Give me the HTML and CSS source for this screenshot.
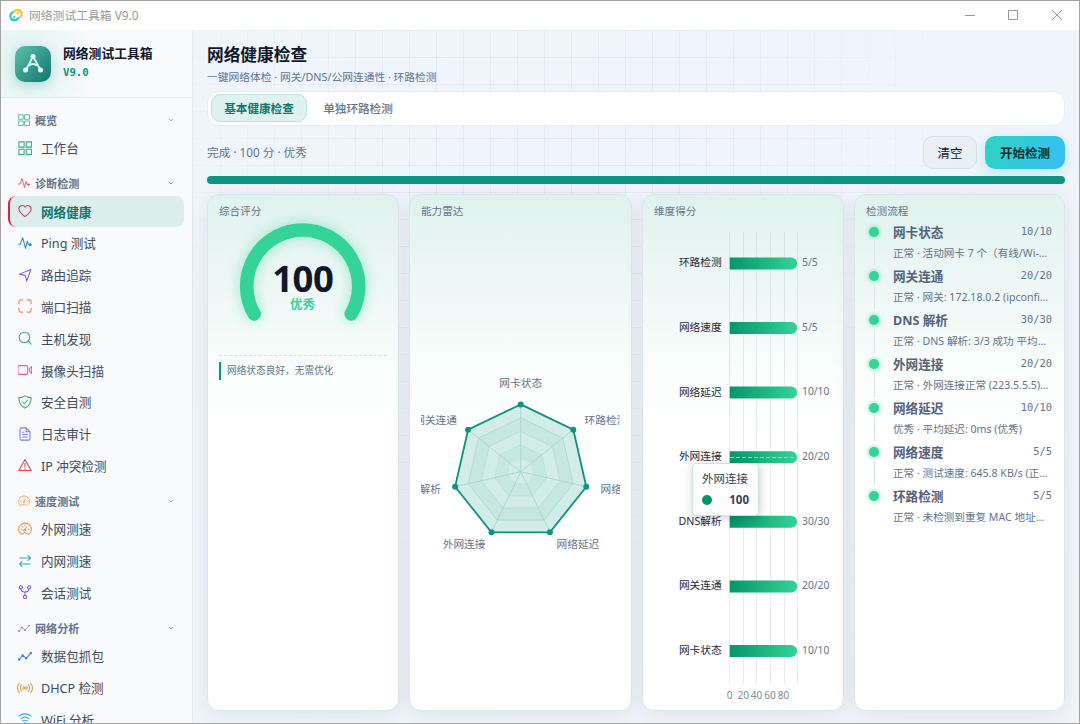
FILE: index.html
```
<!DOCTYPE html>
<html lang="zh-CN">
<head>
    <meta charset="UTF-8">
    <meta name="viewport" content="width=device-width, initial-scale=1.0">
    <title>网络测试工具箱 V9.0</title>
    <link rel="stylesheet" href="styles.css">
</head>
<body>

<!-- 图标 -->
<svg class="defs" width="0" height="0">
    <symbol id="i-grid" viewBox="0 0 24 24"><rect x="1.500" y="1.500" width="9" height="9"/><rect x="14" y="1.500" width="9" height="9"/><rect x="1.500" y="14" width="9" height="9"/><rect x="14" y="14" width="9" height="9"/></symbol>
    <symbol id="i-pulse" viewBox="0 0 24 24"><path d="M1 14h3L8 3l5 18 3-12 2 6h2"/><circle cx="21" cy="15" r="1.500" fill="currentColor"/></symbol>
    <symbol id="i-heart" viewBox="0 0 24 24"><path d="M12 21.500C8 18.500 1.500 14 1.500 8.500A5.600 5.600 0 0 1 12 5.500 5.600 5.600 0 0 1 22.500 8.500C22.500 14 16 18.500 12 21.500z"/></symbol>
    <symbol id="i-send" viewBox="0 0 24 24"><path d="M22 2.500L2.500 10.500l10 2.500 2.500 9.500z"/></symbol>
    <symbol id="i-scan" viewBox="0 0 24 24"><path d="M1.500 8V5a3.500 3.500 0 0 1 3.500-3.500h3M16 1.500h3A3.500 3.500 0 0 1 22.500 5v3M22.500 16v3a3.500 3.500 0 0 1-3.500 3.500h-3M8 22.500H5A3.500 3.500 0 0 1 1.500 19v-3"/></symbol>
    <symbol id="i-search" viewBox="0 0 24 24"><circle cx="11" cy="11" r="9"/><path d="M17.500 17.500L22.500 22.500"/></symbol>
    <symbol id="i-video" viewBox="0 0 24 24"><rect x="0" y="4.500" width="16.500" height="15" rx="2.500"/><path d="M19.500 10l4-4v12l-4-4z"/></symbol>
    <symbol id="i-shield" viewBox="0 0 24 24"><path d="M12 1.500c3 2 6.500 3 10.500 3 0 9-2.500 14-10.500 18C4 18.500 1.500 13.500 1.500 4.500c4 0 7.500-1 10.500-3zM8 12l3 3 5-6"/></symbol>
    <symbol id="i-file" viewBox="0 0 24 24"><path d="M14 1.500H6a2.500 2.500 0 0 0-2.500 2.500v16A2.500 2.500 0 0 0 6 22.500h12a2.500 2.500 0 0 0 2.500-2.500V8zM14 1.500V8h6.500M8 9h2M8 13h8M8 17h8"/></symbol>
    <symbol id="i-alert" viewBox="0 0 24 24"><path d="M12 2.500L1.500 21.500h21zM12 9v6M12 17.500v1.500"/></symbol>
    <symbol id="i-gauge" viewBox="0 0 24 24"><path d="M5 20.500a11 10.500 0 1 1 14 0q-2 1-4-1-3-2-6 0-2 2-4 1zM11 14l4-6M5 13h1.500M18 13h1M7 8l1 1M12 5v1.500"/><circle cx="11.500" cy="14" r="1.500"/></symbol>
    <symbol id="i-swap" viewBox="0 0 24 24"><path d="M3 7h18M17 2.500L21.500 7 17 11M21 17H3M7 13l-4.500 4L7 21.500"/></symbol>
    <symbol id="i-fork" viewBox="0 0 24 24"><circle cx="5" cy="4" r="2.700"/><circle cx="19" cy="4" r="2.700"/><circle cx="12" cy="20.500" r="2.700"/><path d="M5 7c0 4 2 5 7 5 5 0 7-1 7-5M12 12v6"/></symbol>
    <symbol id="i-trend" viewBox="0 0 24 24"><path d="M2 18l6-7 6 5 8-9"/><g fill="currentColor"><circle cx="2" cy="18" r="1.200"/><circle cx="8" cy="11" r="1.200"/><circle cx="14" cy="16" r="1.200"/><circle cx="22" cy="7" r="1.200"/></g></symbol>
    <symbol id="i-cast" viewBox="0 0 28 24"><path d="M4 4c-4 5-4 11 0 16M8 6c-3 4-3 8 0 12M11 9c-1 2-1 4 0 6M24 4c4 5 4 11 0 16M20 6c3 4 3 8 0 12M17 9c1 2 1 4 0 6"/><circle cx="14" cy="12" r="1.200" fill="currentColor"/></symbol>
    <symbol id="i-wifi" viewBox="0 0 24 24"><path d="M1.500 7c6-5 15-5 21 0M5 11.500c4-4 10-4 14 0M8 15.500c3-2 5-2 8 0"/><circle cx="12" cy="20" r="1.500"/></symbol>
    <symbol id="i-down" viewBox="0 0 24 24"><path d="M4 8l8 8 8-8"/></symbol>
</svg>

<div class="window">
    <header class="titlebar">
        <svg class="app-icon" viewBox="0 0 24 24">
            <g fill="none" stroke-width="3.500"><path d="M8 8a7 7 0 1 1 8 9" stroke="#ffc131"/><path d="M16 16a7 7 0 1 1-8-9" stroke="#24c8db"/></g>
            <circle cx="15" cy="8.500" r="2" fill="#ffc131"/><circle cx="9" cy="15.500" r="2" fill="#24c8db"/>
        </svg>
        <span class="titlebar-text">网络测试工具箱 V9.0</span>
        <svg class="win-controls" viewBox="0 0 110 20"><path d="M5 10.500h10M48.500 5.500h9v9h-9zM92 5l10 10M102 5L92 15"/></svg>
    </header>

    <div class="layout">
        <aside class="sidebar">
            <div class="brand">
                <div class="logo">
                    <svg viewBox="0 0 36 36"><g fill="none" stroke="#dcfff6" stroke-width="1.800"><path d="M18 10.500L11 24M18 10.500L25.500 24M14 19.500q4-3 8 0"/></g><g fill="#e6fffa"><circle cx="18" cy="10.500" r="2.500"/><circle cx="10.500" cy="24" r="2.500"/><circle cx="25.500" cy="24" r="2.500"/></g></svg>
                </div>
                <div>
                    <div class="brand-name">网络测试工具箱</div>
                    <div class="brand-version">V9.0</div>
                </div>
            </div>

            <nav class="nav">
                <div class="nav-group teal"><svg><use href="#i-grid"/></svg><span>概览</span><svg class="arrow"><use href="#i-down"/></svg></div>
                <a class="nav-item teal"><svg><use href="#i-grid"/></svg><span>工作台</span></a>

                <div class="nav-group rose"><svg><use href="#i-pulse"/></svg><span>诊断检测</span><svg class="arrow"><use href="#i-down"/></svg></div>
                <a class="nav-item rose active"><svg><use href="#i-heart"/></svg><span>网络健康</span></a>
                <a class="nav-item blue"><svg><use href="#i-pulse"/></svg><span>Ping 测试</span></a>
                <a class="nav-item violet"><svg><use href="#i-send"/></svg><span>路由追踪</span></a>
                <a class="nav-item orange"><svg><use href="#i-scan"/></svg><span>端口扫描</span></a>
                <a class="nav-item teal"><svg><use href="#i-search"/></svg><span>主机发现</span></a>
                <a class="nav-item pink"><svg><use href="#i-video"/></svg><span>摄像头扫描</span></a>
                <a class="nav-item green"><svg><use href="#i-shield"/></svg><span>安全自测</span></a>
                <a class="nav-item indigo"><svg><use href="#i-file"/></svg><span>日志审计</span></a>
                <a class="nav-item red"><svg><use href="#i-alert"/></svg><span>IP 冲突检测</span></a>

                <div class="nav-group amber"><svg><use href="#i-gauge"/></svg><span>速度测试</span><svg class="arrow"><use href="#i-down"/></svg></div>
                <a class="nav-item amber"><svg><use href="#i-gauge"/></svg><span>外网测速</span></a>
                <a class="nav-item cyan"><svg><use href="#i-swap"/></svg><span>内网测速</span></a>
                <a class="nav-item violet"><svg><use href="#i-fork"/></svg><span>会话测试</span></a>

                <div class="nav-group indigo"><svg><use href="#i-trend"/></svg><span>网络分析</span><svg class="arrow"><use href="#i-down"/></svg></div>
                <a class="nav-item royal"><svg><use href="#i-trend"/></svg><span>数据包抓包</span></a>
                <a class="nav-item gold"><svg class="wide"><use href="#i-cast"/></svg><span>DHCP 检测</span></a>
                <a class="nav-item sky"><svg><use href="#i-wifi"/></svg><span>WiFi 分析</span></a>
            </nav>
        </aside>

        <main class="main">
            <h1>网络健康检查</h1>
            <p class="subtitle">一键网络体检 · 网关/DNS/公网连通性 · 环路检测</p>

            <div class="tabs">
                <button class="tab active">基本健康检查</button>
                <button class="tab">单独环路检测</button>
            </div>

            <div class="toolbar">
                <span class="status">完成 · 100 分 · 优秀</span>
                <button class="btn">清空</button>
                <button class="btn primary">开始检测</button>
            </div>
            <div class="progress"></div>

            <div class="cards">
                <section class="card">
                    <h2>综合评分</h2>
                    <svg class="gauge" viewBox="0 0 168 132">
                        <path d="M35.200 95A56 56 0 1 1 132.200 95"/>
                        <text class="gauge-num" x="83.700" y="72.700">100</text>
                        <text class="gauge-level" x="83.500" y="89.500">优秀</text>
                    </svg>
                    <div class="advice"><span>网络状态良好，无需优化</span></div>
                </section>

                <section class="card">
                    <h2>能力雷达</h2>
                    <svg class="radar" viewBox="421 222 199 478">
                        <defs><polygon id="hept" points="0,-67.300 52.600,-42 65.600,15 29.200,60.600 -29.200,60.600 -65.600,15 -52.600,-42"/></defs>
                        <g transform="translate(520.700 471.700)">
                            <g class="rings">
                                <use href="#hept" class="r-light"/>
                                <use href="#hept" class="r-dark" transform="scale(.8)"/>
                                <use href="#hept" class="r-light" transform="scale(.6)"/>
                                <use href="#hept" class="r-dark" transform="scale(.4)"/>
                                <use href="#hept" class="r-light" transform="scale(.2)"/>
                                <path d="M0 0V-67.300M0 0L52.600-42M0 0L65.600 15M0 0L29.200 60.600M0 0L-29.200 60.600M0 0L-65.600 15M0 0L-52.600-42"/>
                            </g>
                            <use href="#hept" class="radar-line"/>
                            <g class="radar-dots"><circle cy="-67.300" r="3"/><circle cx="52.600" cy="-42" r="3"/><circle cx="65.600" cy="15" r="3"/><circle cx="29.200" cy="60.600" r="3"/><circle cx="-29.200" cy="60.600" r="3"/><circle cx="-65.600" cy="15" r="3"/><circle cx="-52.600" cy="-42" r="3"/></g>
                        </g>
                        <g class="radar-labels">
                            <text x="520.700" y="387" text-anchor="middle">网卡状态</text>
                            <text x="584.500" y="424">环路检测</text>
                            <text x="600.500" y="493">网络速度</text>
                            <text x="556.500" y="548">网络延迟</text>
                            <text x="485.500" y="548" text-anchor="end">外网连接</text>
                            <text x="441" y="493" text-anchor="end">DNS解析</text>
                            <text x="457" y="424" text-anchor="end">网关连通</text>
                        </g>
                    </svg>
                </section>

                <section class="card">
                    <h2>维度得分</h2>
                    <svg class="bars" viewBox="654 222 178 478">
                        <defs>
                            <linearGradient id="barFill"><stop offset="0" stop-color="#059669"/><stop offset="1" stop-color="#34d399"/></linearGradient>
                            <path id="bar" d="M0-6H61.500A6 6 0 0 1 61.500 6H0z" fill="url(#barFill)"/>
                        </defs>
                        <path class="grid-lines" d="M729.500 232V684M743.500 232V684M756.500 232V684M770.500 232V684M784.500 232V684M797.500 232V684"/>
                        <use href="#bar" x="729.700" y="263.400"/>
                        <use href="#bar" x="729.700" y="328"/>
                        <use href="#bar" x="729.700" y="392.600"/>
                        <use href="#bar" x="729.700" y="457.200"/>
                        <use href="#bar" x="729.700" y="521.800"/>
                        <use href="#bar" x="729.700" y="586.400"/>
                        <use href="#bar" x="729.700" y="651"/>
                        <path class="pointer" d="M730 457.500H797"/>
                        <g class="bar-names" text-anchor="end">
                            <text x="721.700" y="266">环路检测</text>
                            <text x="721.700" y="331">网络速度</text>
                            <text x="721.700" y="395.500">网络延迟</text>
                            <text x="721.700" y="460">外网连接</text>
                            <text x="721.700" y="524.600">DNS解析</text>
                            <text x="721.700" y="589">网关连通</text>
                            <text x="721.700" y="653.700">网卡状态</text>
                        </g>
                        <g class="bar-values">
                            <text x="802" y="266">5/5</text>
                            <text x="802" y="330.600">5/5</text>
                            <text x="802" y="395.200">10/10</text>
                            <text x="802" y="459.800">20/20</text>
                            <text x="802" y="524.600">30/30</text>
                            <text x="802" y="589">20/20</text>
                            <text x="802" y="653.700">10/10</text>
                        </g>
                        <g class="bar-axis" text-anchor="middle">
                            <text x="729.500" y="699">0</text>
                            <text x="743.200" y="699">20</text>
                            <text x="756.600" y="699">40</text>
                            <text x="770" y="699">60</text>
                            <text x="783.600" y="699">80</text>
                        </g>
                    </svg>
                    <div class="tooltip">
                        <div>外网连接</div>
                        <div class="tooltip-row"><i></i><b>100</b></div>
                    </div>
                </section>

                <section class="card">
                    <h2>检测流程</h2>
                    <ul class="steps">
                        <li><div class="step-head"><b>网卡状态</b><span>10/10</span></div><p>正常 · 活动网卡 7 个（有线/Wi-Fi）</p></li>
                        <li><div class="step-head"><b>网关连通</b><span>20/20</span></div><p>正常 · 网关: 172.18.0.2 (ipconfig) 可达</p></li>
                        <li><div class="step-head"><b>DNS 解析</b><span>30/30</span></div><p>正常 · DNS 解析: 3/3 成功 平均耗时</p></li>
                        <li><div class="step-head"><b>外网连接</b><span>20/20</span></div><p>正常 · 外网连接正常 (223.5.5.5)，可达</p></li>
                        <li><div class="step-head"><b>网络延迟</b><span>10/10</span></div><p>优秀 · 平均延迟: 0ms (优秀)</p></li>
                        <li><div class="step-head"><b>网络速度</b><span>5/5</span></div><p>正常 · 测试速度: 645.8 KB/s (正常)</p></li>
                        <li><div class="step-head"><b>环路检测</b><span>5/5</span></div><p>正常 · 未检测到重复 MAC 地址，正常</p></li>
                    </ul>
                </section>
            </div>
        </main>
    </div>
</div>

</body>
</html>
```
FILE: styles.css
```
/* 基本样式 */
* {
    box-sizing: border-box;
}

body {
    margin: 0;
    height: 100vh;
    overflow: hidden;
    font-family: "Noto Sans", "Noto Sans CJK SC", sans-serif;
    color: #0f172a;
}

h1, h2, p, ul {
    margin: 0;
    padding: 0;
    font-weight: 400;
}

button {
    font-family: inherit;
}

.defs {
    position: absolute;
}

.window {
    height: 100vh;
    display: flex;
    flex-direction: column;
    border: 1px solid #a3a3a3;
}

/* 标题栏 */
.titlebar {
    height: 29px;
    flex: none;
    display: flex;
    align-items: center;
    padding: 0 9px 2px 8px;
    background: #fff;
}

.app-icon {
    width: 14px;
    height: 14px;
    margin-right: 6px;
}

.titlebar-text {
    flex: 1;
    font-size: 11.800px;
    color: #999;
}

.win-controls {
    width: 110px;
    height: 20px;
    fill: none;
    stroke: #999;
}

.layout {
    flex: 1;
    min-height: 0;
    display: flex;
}

/* 侧边栏 */
.sidebar {
    width: 192px;
    flex: none;
    overflow: hidden;
    border-right: 1px solid #e2e8ec;
    background: #f8fafc;
}

.brand {
    height: 68px;
    display: flex;
    align-items: center;
    gap: 12px;
    padding: 0 14px;
    border-bottom: 1px solid #e2e8ec;
    background: radial-gradient(circle at 25px 32px, #def2ef, #f8fafc 70px);
}

.logo {
    width: 36px;
    height: 36px;
    border-radius: 10px;
    background: linear-gradient(135deg, #5cc0ac, #0f766e);
    box-shadow: 0 4px 12px rgba(13, 148, 136, .25);
}

.brand-name {
    font-size: 12.800px;
    font-weight: 700;
    line-height: 20px;
    margin-top: -2px;
}

.brand-version {
    font: 700 10.700px/18px "DejaVu Sans Mono", monospace;
    color: #0d9488;
    margin-top: 1px;
}

.nav {
    padding: 2px 8px 0 7px;
}

.nav-group, .nav-item {
    height: 31.780px;
    display: flex;
    align-items: center;
    padding-left: 10px;
}

.nav-group {
    padding: 8px 10px 0 10px;
    gap: 5px;
    font-size: 11.100px;
    font-weight: 700;
}

.nav-group span {
    flex: 1;
    color: #64748b;
}

.nav svg {
    width: 14px;
    height: 14px;
    fill: none;
    stroke: currentColor;
    stroke-width: 1.800;
    stroke-linecap: round;
    stroke-linejoin: round;
}

.nav-group svg {
    width: 12px;
    height: 12px;
    opacity: .85;
}

.nav-group .arrow {
    width: 6px;
    height: 6px;
    color: #94a3b8;
    stroke-width: 4;
}

.nav-item {
    gap: 9px;
    font-size: 12.600px;
}

.nav svg.wide {
    width: 16px;
    margin: 0 -1px;
}

.nav-item span {
    color: #3f4b5f;
}

.nav-item.active {
    height: 30.780px;
    margin-top: 1px;
    border-left: 2px solid #e11d48;
    padding: 0 0 1px 8px;
    border-radius: 8px;
    background: #dceeeb;
}

.nav-item.active span {
    color: #0f766e;
    font-weight: 700;
}

.teal { color: #35a984; }
.rose { color: #dc3561; }
.blue { color: #2a91bd; }
.violet { color: #8358e0; }
.orange { color: #ed8746; }
.pink { color: #e85b98; }
.green { color: #38ad6b; }
.indigo { color: #8278df; }
.red { color: #e04545; }
.amber { color: #e59a45; }
.cyan { color: #35a6bf; }
.royal { color: #4b7ae5; }
.gold { color: #d4a34c; }
.sky { color: #38a8e0; }

/* 主区域 */
.main {
    flex: 1;
    min-width: 0;
    position: relative;
    display: flex;
    flex-direction: column;
    padding: 14px 14px 12px;
    background: linear-gradient(150deg, #f0f5fb, #eff4fd 45%, #f1f5f9);
}

/* 网格背景 */
.main::before {
    content: "";
    position: absolute;
    inset: 0;
    background:
        linear-gradient(90deg, rgba(100, 116, 139, .08) 1px, transparent 1px),
        linear-gradient(rgba(100, 116, 139, .08) 1px, transparent 1px);
    background-size: 27px 27px;
    -webkit-mask-image: radial-gradient(ellipse at 40% 15%, #000 20%, transparent 58%);
    mask-image: radial-gradient(ellipse at 40% 15%, #000 20%, transparent 58%);
}

.main > * {
    position: relative;
}

h1 {
    font-size: 16.700px;
    font-weight: 700;
    line-height: 22px;
}

.subtitle {
    font-size: 10.750px;
    line-height: 16px;
    margin-top: 3px;
    color: #64748b;
}

.tabs {
    height: 35px;
    flex: none;
    display: flex;
    gap: 3px;
    margin-top: 6px;
    padding: 2px 3px 3px;
    border: 1px solid #e8edf2;
    border-radius: 12px;
    background: #fff;
}

.tab {
    width: 96px;
    padding: 0;
    border: 1px solid transparent;
    border-radius: 9px;
    background: none;
    font-size: 11.600px;
    font-weight: 500;
    color: #64748b;
}

.tab.active {
    border-color: #b9e3db;
    background: #e0f2ef;
    color: #0f766e;
    font-weight: 700;
}

.toolbar {
    display: flex;
    align-items: center;
    gap: 8px;
    margin-top: 10px;
}

.status {
    flex: 1;
    padding-bottom: 3px;
    font-size: 11.700px;
    color: #64748b;
}

.btn {
    width: 54px;
    height: 33px;
    padding: 0 0 1px;
    border: 1px solid #d8dfe7;
    border-radius: 10px;
    background: linear-gradient(135deg, #eceff5, #e7f0f2);
    font-size: 12.500px;
    color: #0f172a;
}

.btn.primary {
    width: 80px;
    border: 0;
    background: linear-gradient(120deg, #2dd4bf, #38bdf8);
    box-shadow: 0 5px 14px rgba(20, 184, 166, .22);
    font-weight: 700;
    color: #042f2e;
}

.progress {
    height: 8px;
    flex: none;
    margin-top: 7px;
    border-radius: 4px;
    background: #0d9480;
}

/* 结果卡片 */
.cards {
    flex: 1;
    min-height: 0;
    display: grid;
    grid-template-columns: 192px 223px 202px 211px;
    justify-content: space-between;
    margin-top: 10px;
}

.card {
    position: relative;
    min-width: 0;
    padding: 8px 11px 10px;
    border: 1px solid #dce6e8;
    border-radius: 12px;
    background: linear-gradient(#e0f2ee, #fbfefd 190px, #fff 240px);
    box-shadow: 0 4px 20px rgba(15, 23, 42, .08);
}

.card h2 {
    font-size: 10.600px;
    line-height: 16px;
    color: #64748b;
}

.card svg {
    display: block;
}

.gauge {
    width: 168px;
    height: 132px;
    overflow: visible;
    fill: none;
}

.gauge path {
    stroke: #34d399;
    stroke-width: 13.500;
    stroke-linecap: round;
    filter: drop-shadow(0 0 7px rgba(52, 211, 153, .45));
}

.gauge text {
    text-anchor: middle;
    font-weight: 700;
}

.gauge-num {
    font-size: 36.500px;
    letter-spacing: -.5px;
    fill: #0f172a;
}

.gauge-level {
    font-size: 12.500px;
    fill: #34d399;
}

.advice {
    margin-top: 4px;
    padding-top: 6px;
    border-top: 1px dashed #d8e1e4;
}

.advice span {
    display: block;
    border-left: 2px solid #0d9480;
    padding-left: 6px;
    font-size: 9.700px;
    line-height: 18px;
    color: #64748b;
}

/* 雷达图 */
.radar {
    width: 199px;
    height: 478px;
    margin-top: 3px;
}

.rings {
    fill: none;
    stroke: #9fcfc6;
    stroke-width: .700;
}

.r-light { fill: #d2ece7; }
.r-dark { fill: #c6e6e0; }

.radar-line {
    fill: none;
    stroke: #0d9480;
    stroke-width: 1.800;
}

.radar-dots {
    fill: #0d9480;
}

.radar-labels {
    font-size: 10.700px;
    fill: #64748b;
}

/* 条形图 */
.bars {
    width: 178px;
    height: 478px;
    margin-top: 3px;
}

.grid-lines {
    stroke: #94a3b8;
    stroke-opacity: .22;
}

.pointer {
    stroke: #86dfba;
    stroke-dasharray: 4 2;
}

.bar-names {
    font-size: 10.700px;
    fill: #1e293b;
}

.bar-values {
    font-size: 10.300px;
    fill: #64748b;
}

.bar-axis {
    font-size: 10px;
    fill: #7f8b9c;
}

.tooltip {
    position: absolute;
    left: 49px;
    top: 268px;
    width: 67px;
    height: 53px;
    padding: 6px 9px;
    border: 1px solid #c3e8df;
    border-radius: 4px;
    background: #fff;
    box-shadow: 1px 2px 10px rgba(0, 0, 0, .2);
    font-size: 11.500px;
    line-height: 18px;
    color: #334155;
}

.tooltip-row {
    display: flex;
    align-items: center;
    justify-content: space-between;
    margin-top: 3px;
}

.tooltip-row i {
    width: 10px;
    height: 10px;
    border-radius: 50%;
    background: #059669;
}

/* 检测流程 */
.steps {
    list-style: none;
}

.steps li {
    position: relative;
    height: 44px;
    padding: 4px 1px 0 27px;
}

.steps li::before {
    content: "";
    position: absolute;
    left: 3px;
    top: 8px;
    width: 10px;
    height: 10px;
    border-radius: 50%;
    background: #34d399;
    box-shadow: 0 0 3px 2px rgba(52, 211, 153, .3);
}

.steps li:not(:last-child)::after {
    content: "";
    position: absolute;
    left: 8px;
    top: 22px;
    width: 1px;
    height: 24px;
    background: #dce4e8;
}

.step-head {
    display: flex;
    justify-content: space-between;
    line-height: 20px;
}

.step-head b {
    font-size: 12.600px;
    color: #536278;
}

.step-head span {
    font: 10.400px/17px "DejaVu Sans Mono", monospace;
    color: #64748b;
}

.steps p {
    overflow: hidden;
    white-space: nowrap;
    text-overflow: ellipsis;
    font-size: 10.600px;
    line-height: 18px;
    margin-top: 1px;
    color: #64748b;
}
```
